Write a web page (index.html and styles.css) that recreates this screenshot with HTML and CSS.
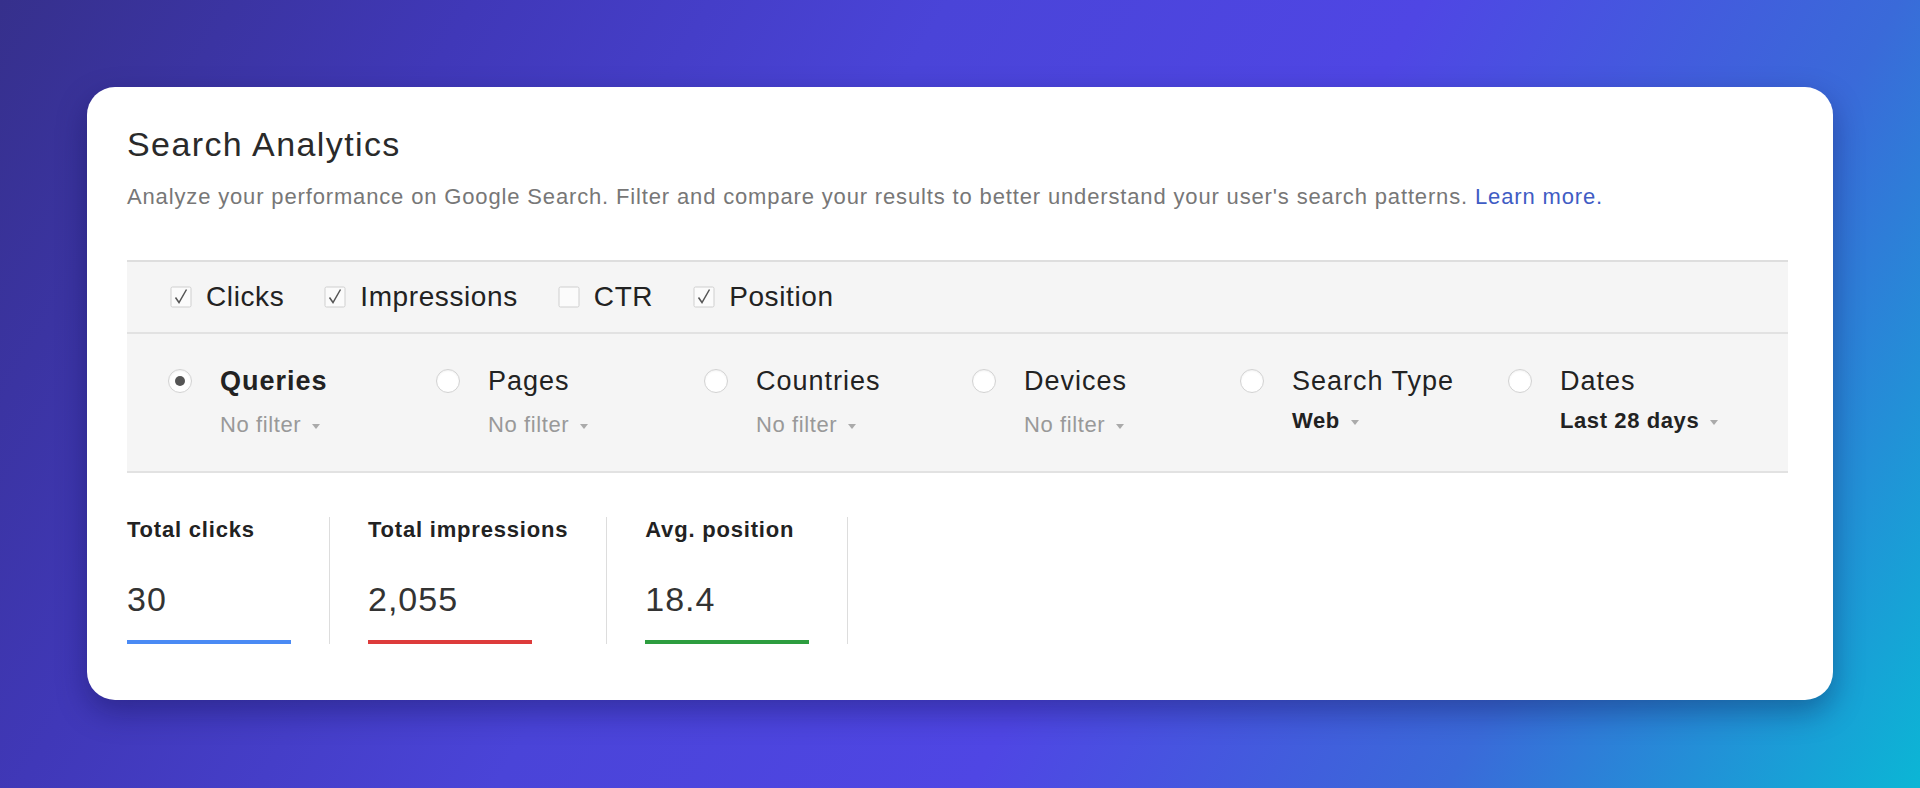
FILE: index.html
```html
<!DOCTYPE html>
<html>
<head>
    <title>Search Analytics</title>
    <meta charset="utf-8">
    <meta name="viewport" content="width=device-width, initial-scale=1">
    <link rel="stylesheet" href="styles.css">
</head>
<body>
    <div class="card">
        <h1 class="title">Search Analytics</h1>
        <p class="desc">
            Analyze your performance on Google Search. Filter and compare your results to better understand your user's search patterns.
            <a href="#" class="learn">Learn more.</a>
        </p>

        <div class="panel">
            <div class="metrics-row">
                <label class="check">
                    <svg class="box" viewBox="0 0 22 22"><rect x="1" y="1" width="20" height="20" rx="1.5" fill="#fbfbfb" stroke="#cfcfcf"/><path d="M5.5 11.5l3.5 5L16.5 3.5" fill="none" stroke="#555" stroke-width="1.5"/></svg>
                    Clicks
                </label>
                <label class="check">
                    <svg class="box" viewBox="0 0 22 22"><rect x="1" y="1" width="20" height="20" rx="1.5" fill="#fbfbfb" stroke="#cfcfcf"/><path d="M5.5 11.5l3.5 5L16.5 3.5" fill="none" stroke="#555" stroke-width="1.5"/></svg>
                    Impressions
                </label>
                <label class="check">
                    <svg class="box" viewBox="0 0 22 22"><rect x="1" y="1" width="20" height="20" rx="1.5" fill="#fbfbfb" stroke="#cfcfcf"/></svg>
                    CTR
                </label>
                <label class="check">
                    <svg class="box" viewBox="0 0 22 22"><rect x="1" y="1" width="20" height="20" rx="1.5" fill="#fbfbfb" stroke="#cfcfcf"/><path d="M5.5 11.5l3.5 5L16.5 3.5" fill="none" stroke="#555" stroke-width="1.5"/></svg>
                    Position
                </label>
            </div>

            <div class="dims-row">
                <div class="dim">
                    <div class="dim-head"><span class="radio selected"></span><span class="dim-name bold">Queries</span></div>
                    <div class="dim-filter">No filter <span class="caret"></span></div>
                </div>
                <div class="dim">
                    <div class="dim-head"><span class="radio"></span><span class="dim-name">Pages</span></div>
                    <div class="dim-filter">No filter <span class="caret"></span></div>
                </div>
                <div class="dim">
                    <div class="dim-head"><span class="radio"></span><span class="dim-name">Countries</span></div>
                    <div class="dim-filter">No filter <span class="caret"></span></div>
                </div>
                <div class="dim">
                    <div class="dim-head"><span class="radio"></span><span class="dim-name">Devices</span></div>
                    <div class="dim-filter">No filter <span class="caret"></span></div>
                </div>
                <div class="dim">
                    <div class="dim-head"><span class="radio"></span><span class="dim-name">Search Type</span></div>
                    <div class="dim-filter set">Web <span class="caret"></span></div>
                </div>
                <div class="dim">
                    <div class="dim-head"><span class="radio"></span><span class="dim-name">Dates</span></div>
                    <div class="dim-filter set">Last 28 days <span class="caret"></span></div>
                </div>
            </div>
        </div>

        <div class="totals">
            <div class="total">
                <div class="total-label">Total clicks</div>
                <div class="total-value">30</div>
                <div class="total-bar blue"></div>
            </div>
            <div class="total">
                <div class="total-label">Total impressions</div>
                <div class="total-value">2,055</div>
                <div class="total-bar red"></div>
            </div>
            <div class="total">
                <div class="total-label">Avg. position</div>
                <div class="total-value">18.4</div>
                <div class="total-bar green"></div>
            </div>
        </div>
    </div>
</body>
</html>
```

FILE: styles.css
```css
html, body {
    height: 100%;
}

body {
    margin: 0;
    padding: 87px;
    box-sizing: border-box;
    font-family: "Liberation Sans", Arial, sans-serif;
    color: #222;
    background: linear-gradient(120deg, #36308c 0%, #4038b8 20%, #4a44d8 40%, #4f46e4 60%, #3a6ad9 80%, #0bb6d5 100%);
    overflow: hidden;
}

.card {
    background: #fff;
    border-radius: 28px;
    padding: 38px 45px 56px 40px;
    box-shadow: 0 12px 30px rgba(10, 10, 60, 0.35);
}

.title {
    margin: 0;
    font-size: 34px;
    line-height: 38px;
    font-weight: normal;
    letter-spacing: 1.4px;
    color: #2a2a2a;
}

.desc {
    margin: 21px 0 0;
    font-size: 22px;
    line-height: 26px;
    letter-spacing: 0.85px;
    color: #777;
}

.learn {
    color: #3f5cc4;
    text-decoration: none;
}

/* filter panel */
.panel {
    margin-top: 50px;
    background: #f5f5f5;
    border-top: 2px solid #dedede;
    border-bottom: 2px solid #e2e2e2;
}

.metrics-row {
    display: flex;
    align-items: center;
    gap: 40px;
    height: 70px;
    padding-left: 43px;
    border-bottom: 2px solid #e2e2e2;
}

.check {
    display: flex;
    align-items: center;
    gap: 14px;
    font-size: 28px;
    letter-spacing: 0.6px;
    color: #222;
}

.box {
    width: 22px;
    height: 22px;
}

.dims-row {
    display: flex;
    padding: 32px 0 33px 41px;
}

.dim {
    width: 268px;
}

.dim-head {
    display: flex;
    align-items: center;
    gap: 28px;
    height: 30px;
}

.dim-name {
    font-size: 27px;
    letter-spacing: 1px;
    color: #222;
}

.dim-name.bold {
    font-weight: bold;
}

.radio {
    position: relative;
    width: 24px;
    height: 24px;
    box-sizing: border-box;
    border-radius: 50%;
    border: 1px solid #d2d2d2;
    background: #fff;
    box-shadow: inset 0 1px 2px rgba(0, 0, 0, 0.06);
}

.radio.selected:after {
    content: "";
    position: absolute;
    left: 6px;
    top: 6px;
    width: 10px;
    height: 10px;
    border-radius: 50%;
    background: #555;
}

.dim-filter {
    margin: 16px 0 0 52px;
    font-size: 22px;
    line-height: 26px;
    letter-spacing: 0.6px;
    color: #999;
}

.dim-filter.set {
    font-weight: bold;
    color: #222;
    margin-top: 12px;
}

.caret {
    display: inline-block;
    margin-left: 4px;
    vertical-align: middle;
    border-left: 4px solid transparent;
    border-right: 4px solid transparent;
    border-top: 5px solid #aaa;
}

/* totals */
.totals {
    display: flex;
    margin-top: 44px;
}

.total {
    padding-right: 38px;
    margin-right: 38px;
    border-right: 1px solid #ddd;
}

.total-label {
    font-size: 22px;
    line-height: 26px;
    font-weight: bold;
    letter-spacing: 0.8px;
    color: #222;
}

.total-value {
    margin-top: 36px;
    font-size: 34px;
    line-height: 40px;
    letter-spacing: 1px;
    color: #333;
}

.total-bar {
    width: 164px;
    height: 4px;
    margin-top: 21px;
}

.blue { background: #4a8af4; }
.red { background: #dd3b3b; }
.green { background: #2d9d3f; }
```
